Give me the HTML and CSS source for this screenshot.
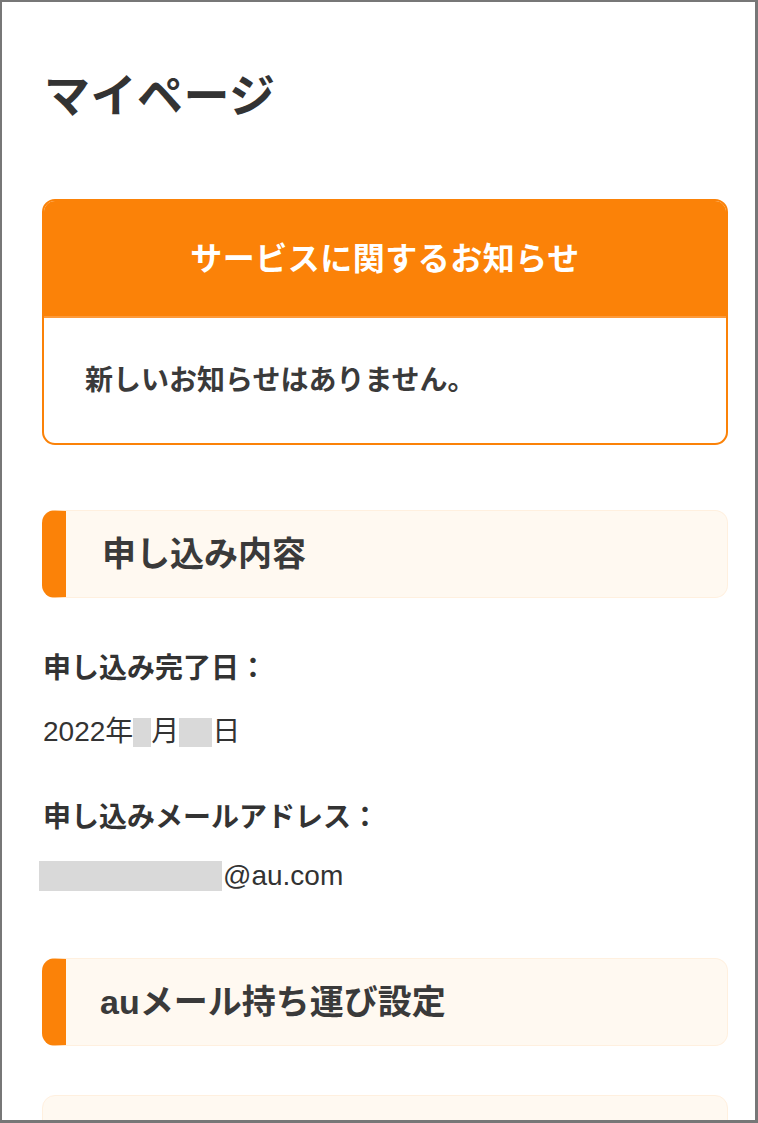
FILE: index.html
```html
<!DOCTYPE html>
<html lang="ja">
<head>
<meta charset="utf-8">
<title>マイページ</title>
<link rel="stylesheet" href="styles.css">
</head>
<body>
<div class="frame">
  <main class="page">
    <h1 class="title">マイページ</h1>

    <section class="notice">
      <div class="notice-head">サービスに関するお知らせ</div>
      <div class="notice-body">新しいお知らせはありません。</div>
    </section>

    <h2 class="sec-head sec-first">申し込み内容</h2>

    <p class="label label-first">申し込み完了日：</p>
    <p class="value value-date">2022年<span class="mask mask-m"></span>月<span class="mask mask-d"></span>日</p>

    <p class="label label-second">申し込みメールアドレス：</p>
    <p class="value value-mail"><span class="mask mask-mail"></span>@au.com</p>

    <h2 class="sec-head sec-second">auメール持ち運び設定</h2>

    <div class="panel"></div>
  </main>
</div>
</body>
</html>
```

FILE: styles.css
```css
html, body {
  margin: 0;
  padding: 0;
  background: #ffffff;
}

.frame {
  box-sizing: border-box;
  width: 758px;
  height: 1123px;
  border-top: 2px solid #777777;
  border-left: 2px solid #777777;
  border-right: 3px solid #777777;
  border-bottom: 3px solid #777777;
  overflow: hidden;
  background: #ffffff;
}

.page {
  display: flex;
  flex-direction: column;
  padding: 66px 27px 0 40px;
  font-family: "Liberation Sans", "Noto Sans CJK JP", sans-serif;
  color: #333333;
}

.title {
  margin: 0;
  font-size: 46px;
  line-height: 56px;
  font-weight: 700;
  letter-spacing: 0.5px;
  padding-left: 2px;
}

.notice {
  margin-top: 75px;
  border: 2px solid #fb8208;
  border-radius: 13px;
  overflow: hidden;
}

.notice-head {
  box-sizing: border-box;
  background: #fb8208;
  color: #ffffff;
  height: 117px;
  padding-bottom: 5px;
  display: flex;
  align-items: center;
  justify-content: center;
  font-size: 32px;
  font-weight: 700;
  letter-spacing: 0.5px;
  border-bottom: 2px solid #fd9a3a;
}

.notice-body {
  padding: 43px 0 42px 41px;
  font-size: 28px;
  line-height: 40px;
  font-weight: 700;
  color: #3a3a3a;
}

.sec-head {
  margin: 0;
  height: 88px;
  box-sizing: border-box;
  display: flex;
  align-items: center;
  padding-left: 36px;
  padding-bottom: 5px;
  background: #fff9f1;
  border: 1px solid #fff0df;
  border-left: 24px solid #fb8208;
  border-radius: 13px;
  font-size: 34px;
  font-weight: 700;
  color: #3a3a3a;
}

.sec-first {
  margin-top: 65px;
}

.sec-second {
  margin-top: 62px;
  padding-left: 34px;
}

.label {
  margin: 0;
  padding-left: 1px;
  font-size: 28px;
  line-height: 40px;
  font-weight: 700;
  color: #333333;
}

.label-first {
  margin-top: 51px;
}

.label-second {
  margin-top: 46px;
}

.value {
  margin: 0;
  padding-left: 1px;
  font-size: 28px;
  line-height: 40px;
  font-weight: 400;
  color: #333333;
  display: flex;
  align-items: center;
}

.value-date {
  margin-top: 23px;
}

.value-mail {
  margin-top: 18px;
}

.mask {
  display: inline-block;
  background: #d9d9d9;
}

.mask-m {
  width: 18px;
  height: 29px;
}

.mask-d {
  width: 33px;
  height: 29px;
}

.mask-mail {
  width: 183px;
  height: 30px;
  margin-left: -4px;
  margin-right: 1px;
}

.panel {
  margin-top: 49px;
  height: 120px;
  flex-shrink: 0;
  background: #fff9f1;
  border: 1px solid #fff0df;
  border-radius: 13px;
}
```
